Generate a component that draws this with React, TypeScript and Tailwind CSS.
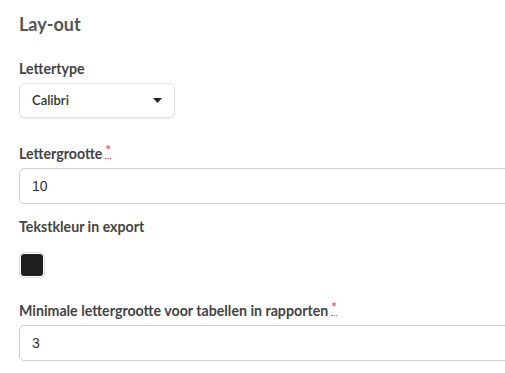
import { ReactNode } from "react";

// Required marker: red asterisk with dotted underline
function Required() {
  return (
    <abbr
      title="verplicht"
      className="ml-[3px] text-[#e25a5a] no-underline border-b border-dotted border-[#e25a5a] text-[13px] leading-none align-top"
    >
      *
    </abbr>
  );
}

function Label({ children, required }: { children: ReactNode; required?: boolean }) {
  return (
    <label className="block text-[14.2px] leading-5 font-bold text-[#444]">
      {children}
      {required && <Required />}
    </label>
  );
}

function TextInput({ value }: { value: string }) {
  return (
    <input
      readOnly
      value={value}
      className="block w-[520px] h-[36px] rounded-[5px] border border-[#cfcfcf] bg-white px-[12px] text-[14px] text-[#333] outline-none"
      style={{ fontFamily: '"Liberation Sans", Arial, sans-serif' }}
    />
  );
}

export default function App() {
  return (
    <div
      className="w-[505px] h-[373px] overflow-hidden bg-white pl-[19px] pt-[13px]"
      style={{ fontFamily: 'Lato, "Noto Sans", sans-serif' }}
    >
      <h2 className="text-[18px] leading-[22px] font-bold text-[#555]">Lay-out</h2>

      <div className="mt-[24px]">
        <Label>Lettertype</Label>
        <div className="mt-[4px] flex items-center justify-between w-[156px] h-[35px] rounded-[6px] border border-[#e2e2e2] bg-white pl-[12px] pr-[12px] shadow-[0_1px_2px_rgba(0,0,0,0.08)]">
          <span className="text-[13px] font-semibold text-[#333]">Calibri</span>
          <svg width="9" height="5" viewBox="0 0 9 5">
            <path d="M0 0h9L4.5 5z" fill="#222" />
          </svg>
        </div>
      </div>

      <div className="mt-[26px]">
        <Label required>Lettergrootte</Label>
        <div className="mt-[4px]">
          <TextInput value="10" />
        </div>
      </div>

      <div className="mt-[13px]">
        <Label>Tekstkleur in export</Label>
        <div className="mt-[15px] w-[26px] h-[26px] rounded-[4px] border border-[#ddd] p-[1px] bg-white">
          <div className="w-full h-full rounded-[3px] bg-[#1f1f1f]" />
        </div>
      </div>

      <div className="mt-[23px]">
        <Label required>Minimale lettergrootte voor tabellen in rapporten</Label>
        <div className="mt-[4px]">
          <TextInput value="3" />
        </div>
      </div>
    </div>
  );
}
